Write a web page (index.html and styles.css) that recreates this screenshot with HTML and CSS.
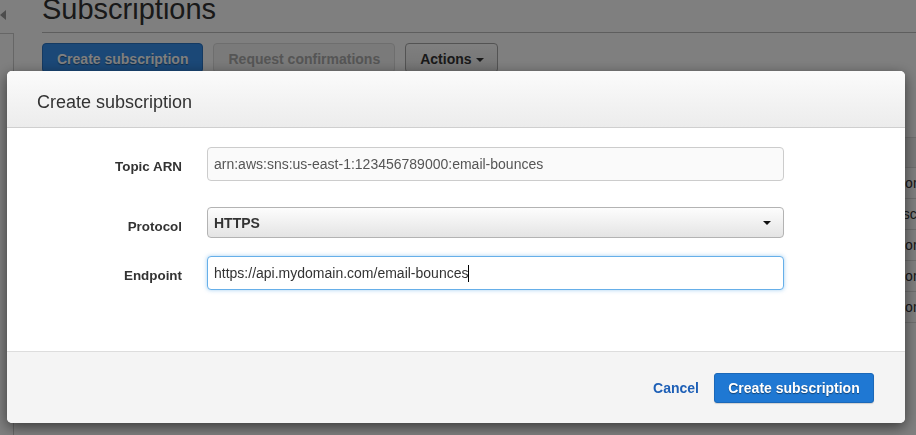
FILE: index.html
```html
<!DOCTYPE html>
<html lang="en">
<head>
<meta charset="utf-8">
<title>Subscriptions</title>
<link rel="stylesheet" href="styles.css">
</head>
<body>
<div class="layout">
  <aside class="sidebar">
    <div class="sidebar-toggle"><span class="arrow"></span></div>
    <div class="sidebar-panel"></div>
  </aside>
  <main class="main">
    <h1 class="page-title">Subscriptions</h1>
    <div class="toolbar">
      <button class="btn btn-primary">Create subscription</button>
      <button class="btn btn-disabled">Request confirmations</button>
      <button class="btn btn-default">Actions <span class="caret"></span></button>
    </div>
    <div class="grid">
      <div class="grid-row grid-head"><div class="cell-main">Subscription ID</div><div class="cell-proto"></div></div>
      <div class="grid-row"><div class="cell-main">arn:aws:sns:us-east-1:123456789000:email-bounces</div><div class="cell-proto">json</div></div>
      <div class="grid-row"><div class="cell-main">arn:aws:sns:us-east-1:123456789000:email-bounces</div><div class="cell-proto">esco</div></div>
      <div class="grid-row"><div class="cell-main">arn:aws:sns:us-east-1:123456789000:email-bounces</div><div class="cell-proto">json</div></div>
      <div class="grid-row"><div class="cell-main">arn:aws:sns:us-east-1:123456789000:email-bounces</div><div class="cell-proto">json</div></div>
      <div class="grid-row"><div class="cell-main">arn:aws:sns:us-east-1:123456789000:email-bounces</div><div class="cell-proto">json</div></div>
    </div>
  </main>
</div>

<div class="overlay"></div>

<div class="modal">
  <div class="modal-header">
    <h2 class="modal-title">Create subscription</h2>
  </div>
  <div class="modal-body">
    <div class="form-row form-row-first">
      <label class="form-label">Topic ARN</label>
      <div class="field field-readonly">arn:aws:sns:us-east-1:123456789000:email-bounces</div>
    </div>
    <div class="form-row form-row-second">
      <label class="form-label form-label-low">Protocol</label>
      <div class="select"><span class="select-value">HTTPS</span><span class="select-caret"></span></div>
    </div>
    <div class="form-row">
      <label class="form-label">Endpoint</label>
      <div class="field field-focus">https://api.mydomain.com/email-bounces<span class="text-cursor"></span></div>
    </div>
  </div>
  <div class="modal-footer">
    <a class="link-cancel" href="#">Cancel</a>
    <button class="btn-submit">Create subscription</button>
  </div>
</div>
</body>
</html>
```

FILE: styles.css
```css
* { box-sizing: border-box; }

html, body {
  margin: 0;
  padding: 0;
  height: 100%;
  overflow: hidden;
}

body {
  background: #ffffff;
  font-family: "Liberation Sans", Arial, Helvetica, sans-serif;
  color: #333333;
}

/* ---------- page behind the dialog ---------- */
.layout {
  display: flex;
  height: 100vh;
}

.sidebar {
  width: 14px;
  display: flex;
  flex-direction: column;
}

.sidebar-toggle {
  height: 34px;
  border-bottom: 1px solid #cccccc;
  padding-top: 10px;
}

.arrow {
  display: block;
  width: 0;
  height: 0;
  border-top: 5px solid transparent;
  border-bottom: 5px solid transparent;
  border-right: 6px solid #9a9a9a;
}

.sidebar-panel {
  flex: 1;
  border-right: 1px solid #cccccc;
}

.main {
  flex: 1;
  margin-left: 28px;
  min-width: 0;
}

.page-title {
  margin: -7px 0 0;
  font-size: 29px;
  line-height: 33px;
  font-weight: normal;
  color: #333333;
  padding-bottom: 6px;
  border-bottom: 1px solid #bcbcbc;
}

.toolbar {
  display: flex;
  gap: 10px;
  margin-top: 10px;
}

.btn {
  height: 30px;
  padding: 1px 14px 0;
  border-radius: 4px;
  font-family: inherit;
  font-size: 14px;
  font-weight: bold;
  white-space: nowrap;
  border: 1px solid #aaaaaa;
}

.btn-primary {
  background: #3690ee;
  border-color: #2a74c4;
  color: #ffffff;
  text-shadow: 0 1px 1px rgba(0,0,0,0.4);
}

.btn-disabled {
  background: #f4f4f4;
  border-color: #dddddd;
  color: #aaaaaa;
}

.btn-default {
  padding: 1px 13px 0 14px;
  background: linear-gradient(#ffffff, #e8e8e8);
  border-color: #a6a6a6;
  color: #333333;
}

.caret {
  display: inline-block;
  width: 0;
  height: 0;
  margin-left: 1px;
  vertical-align: middle;
  border-left: 4px solid transparent;
  border-right: 4px solid transparent;
  border-top: 4px solid #333333;
}

.grid {
  margin-top: 64px;
  border-left: 1px solid #cccccc;
  font-size: 14px;
  color: #333333;
}

.grid-row {
  display: flex;
  height: 31px;
  align-items: center;
  border-bottom: 1px solid #dddddd;
}

.grid-head {
  border-top: 1px solid #dddddd;
  background: #f2f2f2;
  font-weight: bold;
}

.cell-main {
  flex: 1;
  padding-left: 10px;
  white-space: nowrap;
  overflow: hidden;
}

.cell-proto {
  width: 21px;
  white-space: nowrap;
  overflow: hidden;
}

/* ---------- dialog ---------- */
.overlay {
  position: fixed;
  inset: 0;
  background: rgba(0,0,0,0.5);
}

.modal {
  position: fixed;
  left: 7px;
  top: 71px;
  width: 898px;
  height: 352px;
  background: #ffffff;
  border-radius: 5px;
  overflow: hidden;
  box-shadow: 0 4px 14px rgba(0,0,0,0.55);
  display: flex;
  flex-direction: column;
}

.modal-header {
  height: 57px;
  padding: 21px 30px 0;
  background: linear-gradient(#fbfbfb, #ececec);
  border-bottom: 1px solid #cfcfcf;
}

.modal-title {
  margin: 0;
  font-size: 18px;
  line-height: 20px;
  font-weight: normal;
  color: #333333;
}

.modal-body {
  height: 223px;
  padding-top: 19px;
}

.form-row {
  display: flex;
  align-items: center;
}

.form-row-first { margin-bottom: 26px; }
.form-row-second { margin-bottom: 18px; }

.form-label {
  width: 175px;
  margin-right: 25px;
  padding-top: 5px;
  line-height: 16px;
  text-align: right;
  font-size: 13.4px;
  font-weight: bold;
  color: #333333;
}

.form-label-low {
  padding-top: 9px;
}

.field {
  width: 577px;
  height: 34px;
  padding: 0 6px;
  border-radius: 4px;
  font-size: 14px;
  line-height: 32px;
  white-space: nowrap;
}

.field-readonly {
  background: #fafafa;
  border: 1px solid #cccccc;
  color: #555555;
}

.field-focus {
  background: #ffffff;
  border: 1px solid #66afe9;
  box-shadow: 0 0 4px rgba(102,175,233,0.6);
  color: #333333;
}

.text-cursor {
  display: inline-block;
  width: 1px;
  height: 17px;
  background: #000000;
  vertical-align: -4px;
}

.select {
  width: 577px;
  height: 31px;
  padding: 0 12px 0 6px;
  border: 1px solid #b3b3b3;
  border-radius: 4px;
  background: linear-gradient(#fdfdfd, #e4e4e4);
  display: flex;
  align-items: center;
  justify-content: space-between;
}

.select-value {
  font-size: 14px;
  font-weight: bold;
  color: #333333;
}

.select-caret {
  width: 0;
  height: 0;
  border-left: 4px solid transparent;
  border-right: 4px solid transparent;
  border-top: 4px solid #111111;
}

.modal-footer {
  flex: 1;
  background: #f4f4f4;
  border-top: 1px solid #dddddd;
  display: flex;
  justify-content: flex-end;
  align-items: center;
  gap: 15px;
  padding-right: 31px;
}

.link-cancel {
  font-size: 14px;
  font-weight: bold;
  color: #1d5fb6;
  text-decoration: none;
}

.btn-submit {
  width: 160px;
  height: 30px;
  border: 1px solid #1b68b8;
  border-radius: 3px;
  background: #1f78d3;
  color: #ffffff;
  font-family: inherit;
  font-size: 14px;
  font-weight: bold;
  text-shadow: 0 1px 1px rgba(0,0,0,0.45);
  box-shadow: 0 1px 1px rgba(0,0,0,0.15);
}
```
